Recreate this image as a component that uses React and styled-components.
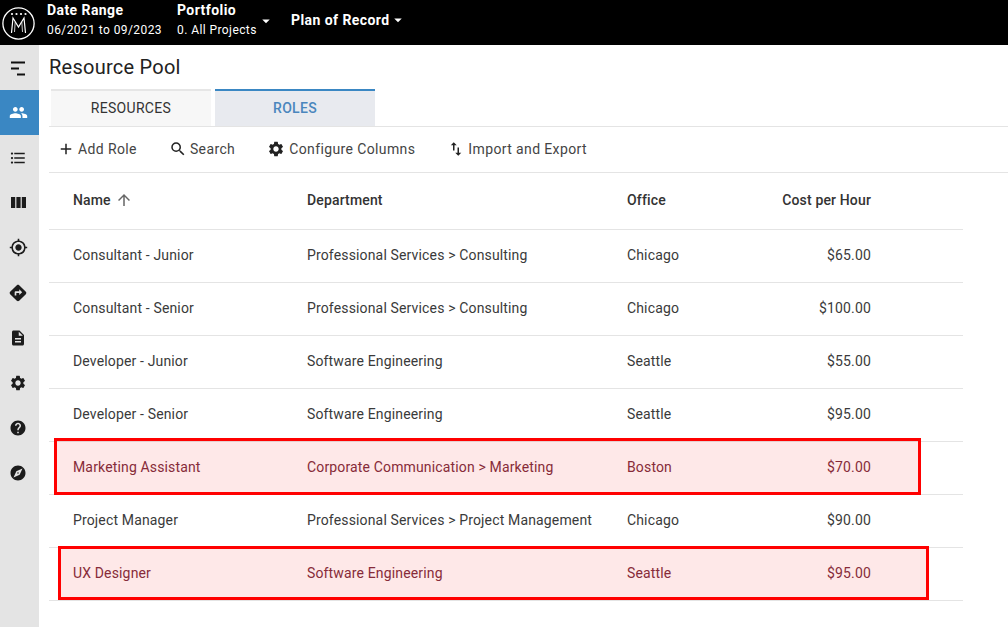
import styled, { createGlobalStyle } from "styled-components";
import {
  MdAdd,
  MdArrowDropDown,
  MdArrowUpward,
  MdDescription,
  MdDirections,
  MdExplore,
  MdFormatListBulleted,
  MdHelp,
  MdImportExport,
  MdMyLocation,
  MdPeople,
  MdSearch,
  MdSettings,
} from "react-icons/md";

const roles = [
  { name: "Consultant - Junior", dept: "Professional Services > Consulting", office: "Chicago", cost: "$65.00" },
  { name: "Consultant - Senior", dept: "Professional Services > Consulting", office: "Chicago", cost: "$100.00" },
  { name: "Developer - Junior", dept: "Software Engineering", office: "Seattle", cost: "$55.00" },
  { name: "Developer - Senior", dept: "Software Engineering", office: "Seattle", cost: "$95.00" },
  { name: "Marketing Assistant", dept: "Corporate Communication > Marketing", office: "Boston", cost: "$70.00", mark: "wide" },
  { name: "Project Manager", dept: "Professional Services > Project Management", office: "Chicago", cost: "$90.00" },
  { name: "UX Designer", dept: "Software Engineering", office: "Seattle", cost: "$95.00", mark: "wider" },
];

const Logo = () => (
  <svg width="33" height="33" viewBox="0 0 33 33" fill="none" stroke="#fff">
    <circle cx="16.5" cy="16.5" r="15.6" strokeWidth="1.3" />
    <path d="M9.5 26 L11 11 L16.5 20 L22 11 L23.5 26" strokeWidth="1.2" />
    <path d="M12.5 25 L13.2 15 M20.5 25 L19.8 15" strokeWidth="0.8" />
    <g fill="#fff" strokeWidth="0">
      <circle cx="10" cy="7" r="1.1" />
      <circle cx="14.5" cy="7" r="1.1" />
      <circle cx="19" cy="7" r="1.1" />
      <circle cx="23.5" cy="7" r="1.1" />
    </g>
  </svg>
);

const CollapseIcon = () => (
  <svg width="16" height="16" viewBox="0 0 16 16" fill="#111">
    <rect x="1" y="1.5" width="14" height="2" />
    <rect x="1" y="7.5" width="8" height="2" />
    <rect x="7" y="13.5" width="8" height="2" />
  </svg>
);

const ColumnsIcon = () => (
  <svg width="15" height="11" viewBox="0 0 15 11" fill="#1c1c1c">
    <rect x="0" y="0" width="4.2" height="11" />
    <rect x="5.4" y="0" width="4.2" height="11" />
    <rect x="10.8" y="0" width="4.2" height="11" />
  </svg>
);

const App = () => {
  return (
    <>
      <GlobalStyle />
      <TopBar>
        <LogoWrap>
          <Logo />
        </LogoWrap>
        <DateBlock>
          <BarTitle>Date Range</BarTitle>
          <BarSub>06/2021 to 09/2023</BarSub>
        </DateBlock>
        <PortfolioBlock>
          <div>
            <BarTitle>Portfolio</BarTitle>
            <BarSub>0. All Projects</BarSub>
          </div>
          <MdArrowDropDown size={18} />
        </PortfolioBlock>
        <PlanBlock>
          <BarTitle>Plan of Record</BarTitle>
          <MdArrowDropDown size={18} />
        </PlanBlock>
      </TopBar>
      <Body>
        <SideNav>
          <NavItem><CollapseIcon /></NavItem>
          <NavItem $active><MdPeople size={19} /></NavItem>
          <NavItem><MdFormatListBulleted size={18} /></NavItem>
          <NavItem><ColumnsIcon /></NavItem>
          <NavItem><MdMyLocation size={19} /></NavItem>
          <NavItem><MdDirections size={20} /></NavItem>
          <NavItem><MdDescription size={18} /></NavItem>
          <NavItem><MdSettings size={18} /></NavItem>
          <NavItem><MdHelp size={18} /></NavItem>
          <NavItem><MdExplore size={18} /></NavItem>
        </SideNav>
        <Main>
          <Title>Resource Pool</Title>
          <Tabs>
            <Tab>RESOURCES</Tab>
            <Tab $active>ROLES</Tab>
          </Tabs>
          <Toolbar>
            <ToolButton><MdAdd size={18} />Add Role</ToolButton>
            <ToolButton><MdSearch size={18} />Search</ToolButton>
            <ToolButton $wide><MdSettings size={18} />Configure Columns</ToolButton>
            <ToolButton><MdImportExport size={18} />Import and Export</ToolButton>
          </Toolbar>
          <Table>
            <HeadRow>
              <span>Name <SortIcon><MdArrowUpward size={18} /></SortIcon></span>
              <span>Department</span>
              <span>Office</span>
              <CostCell>Cost per Hour</CostCell>
            </HeadRow>
            {roles.map((role) => (
              <Row key={role.name} $marked={!!role.mark}>
                <span>{role.name}</span>
                <span>{role.dept}</span>
                <span>{role.office}</span>
                <CostCell>{role.cost}</CostCell>
                {role.mark && <Marker $kind={role.mark} />}
              </Row>
            ))}
          </Table>
        </Main>
      </Body>
    </>
  );
};

export default App;

const GlobalStyle = createGlobalStyle`
  html, body {
    margin: 0;
    background: #fff;
    font-family: Roboto, "Liberation Sans", sans-serif;
    color: #2e2e2e;
  }
  * {
    box-sizing: border-box;
  }
`;

const TopBar = styled.header`
  display: flex;
  align-items: center;
  height: 45px;
  padding-bottom: 6px;
  background: #000;
  color: #fff;
`;
const LogoWrap = styled.div`
  display: flex;
  width: 47px;
  padding-left: 2px;
  margin-top: 8px;
`;
const DateBlock = styled.div`
  width: 130px;
`;
const PortfolioBlock = styled.div`
  display: flex;
  align-items: center;
  width: 114px;
  svg {
    margin-top: 2px;
  }
`;
const PlanBlock = styled.div`
  display: flex;
  align-items: center;
  svg {
    margin-left: -1px;
  }
`;
const BarTitle = styled.div`
  font-size: 14px;
  font-weight: 700;
  line-height: 20px;
  letter-spacing: 0.43px;
`;
const BarSub = styled.div`
  margin-top: 1px;
  font-size: 12px;
  line-height: 18px;
  letter-spacing: 0.42px;
`;
const Body = styled.div`
  display: flex;
  height: 582px;
`;
const SideNav = styled.nav`
  width: 39px;
  flex-shrink: 0;
  background: #e4e4e4;
`;
const NavItem = styled.div`
  display: flex;
  align-items: center;
  justify-content: center;
  height: 45px;
  padding-right: 3px;
  background: ${(p) => (p.$active ? "#3a87c3" : "transparent")};
  color: ${(p) => (p.$active ? "#fff" : "#1c1c1c")};
`;
const Main = styled.main`
  flex: 1;
  padding-left: 10px;
`;
const Title = styled.h1`
  margin: 0;
  height: 44px;
  font-size: 20px;
  font-weight: 400;
  line-height: 44px;
  letter-spacing: 0.25px;
  color: #222;
`;
const Tabs = styled.div`
  display: flex;
  gap: 4px;
  height: 38px;
  padding-left: 2px;
  border-bottom: 1px solid #e4e4e4;
`;
const Tab = styled.div`
  display: flex;
  align-items: center;
  justify-content: center;
  width: 160px;
  height: 37px;
  padding-bottom: 2px;
  font-size: 14px;
  letter-spacing: 0.3px;
  border-top: 2px solid ${(p) => (p.$active ? "#3a87c3" : "#e6e6e6")};
  background: ${(p) => (p.$active ? "#e8eaef" : "#f7f7f7")};
  color: ${(p) => (p.$active ? "#4a86bd" : "#333")};
  font-weight: ${(p) => (p.$active ? 500 : 400)};
`;
const Toolbar = styled.div`
  display: flex;
  align-items: center;
  gap: 32px;
  height: 46px;
  padding-left: 8px;
  padding-bottom: 2px;
  border-bottom: 1px solid #e4e4e4;
`;
const ToolButton = styled.div`
  display: flex;
  align-items: center;
  gap: ${(p) => (p.$wide ? "4px" : "3px")};
  font-size: 14px;
  letter-spacing: 0.38px;
  color: #444;
  svg {
    color: #222;
  }
`;
const Table = styled.div`
  width: 914px;
`;
const HeadRow = styled.div`
  display: grid;
  grid-template-columns: 234px 320px 130px 114px;
  align-items: center;
  height: 57px;
  padding-left: 24px;
  padding-bottom: 2px;
  font-size: 14px;
  font-weight: 500;
  letter-spacing: 0.15px;
  border-bottom: 1px solid #e4e4e4;
  color: #333;
`;
const SortIcon = styled.span`
  display: inline-flex;
  vertical-align: -4px;
  margin-left: 1px;
  color: #666;
`;
const Row = styled.div`
  position: relative;
  display: grid;
  grid-template-columns: 234px 320px 130px 114px;
  align-items: center;
  height: 53px;
  padding-left: 24px;
  padding-bottom: 2px;
  font-size: 14px;
  letter-spacing: 0.15px;
  border-bottom: 1px solid #e4e4e4;
  color: ${(p) => (p.$marked ? "#7c3040" : "#3a3a3a")};
`;
const CostCell = styled.span`
  text-align: right;
`;
const Marker = styled.div`
  position: absolute;
  top: ${(p) => (p.$kind === "wide" ? "-4px" : "-2px")};
  bottom: ${(p) => (p.$kind === "wide" ? "-1px" : "0")};
  left: ${(p) => (p.$kind === "wide" ? "5px" : "9px")};
  width: ${(p) => (p.$kind === "wide" ? "867px" : "871px")};
  border: 3px solid #f00;
  background: rgba(240, 0, 0, 0.09);
`;
